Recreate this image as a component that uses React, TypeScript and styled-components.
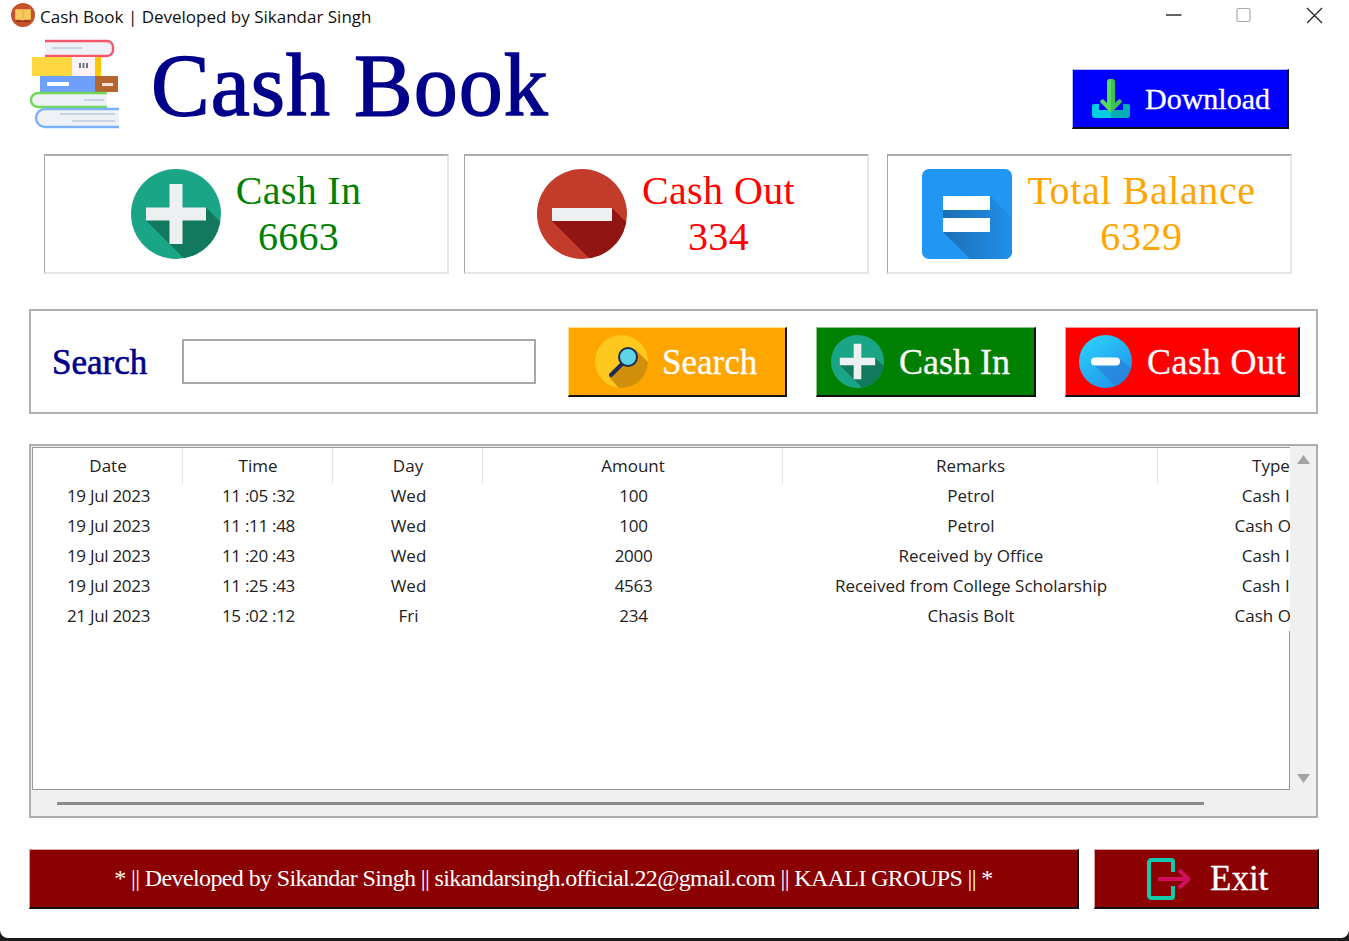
import React from 'react'
import styled, { createGlobalStyle } from 'styled-components'

const GlobalStyle = createGlobalStyle`
  html, body {
    margin: 0;
    padding: 0;
    background: #1c1c1c;
  }
  * {
    box-sizing: border-box;
  }
`

const serif = `"Liberation Serif", "Times New Roman", serif`
const ui = `"Open Sans", "Noto Sans", sans-serif`

const Window = styled.div`
  width: 1349px;
  height: 938px;
  background: #fff;
  border-radius: 0 0 8px 8px;
  overflow: hidden;
  display: flex;
  flex-direction: column;
`
const TitleBar = styled.div`
  height: 33px;
  display: flex;
  align-items: flex-start;
  padding: 3px 0 0 11px;
`
const TitleText = styled.span`
  flex: 1;
  margin-left: 5px;
  font-family: ${ui};
  font-size: 17px;
  line-height: 27px;
  color: #111;
`
const WindowControl = styled.div`
  width: 70px;
  height: 24px;
  display: flex;
  align-items: center;
  justify-content: center;
`
const Main = styled.main`
  flex: 1;
  display: flex;
  flex-direction: column;
  padding: 0 31px 0 29px;
`
const Header = styled.header`
  height: 121px;
  display: flex;
  align-items: flex-start;
  padding: 5px 0 0 1px;
`
const AppTitle = styled.h1`
  flex: 1;
  margin: 2px 0 0 31px;
  font-family: ${serif};
  font-size: 88px;
  font-weight: 400;
  letter-spacing: 1px;
  line-height: 92px;
  color: #00008b;
  -webkit-text-stroke: 1.4px #00008b;
`
const Button = styled.button<{ $bg: string; $w: number; $pad: number; $gap: number; $size: number; $light: string }>`
  width: ${(p) => p.$w}px;
  height: 100%;
  display: flex;
  align-items: center;
  gap: ${(p) => p.$gap}px;
  padding: 0 0 0 ${(p) => p.$pad}px;
  background: ${(p) => p.$bg};
  border: 0;
  border-top: 1px solid ${(p) => p.$light};
  border-left: 1px solid ${(p) => p.$light};
  border-right: 2px solid #111;
  border-bottom: 2px solid #111;
  font-family: ${serif};
  font-size: ${(p) => p.$size}px;
  color: #fff;
  -webkit-text-stroke: 0.3px #fff;
`
const ButtonLabel = styled.span<{ $ls?: number; $drop?: number }>`
  letter-spacing: ${(p) => p.$ls ?? 0}px;
  padding-top: ${(p) => p.$drop ?? 0}px;
`
const DownloadSlot = styled.div`
  width: 217px;
  height: 60px;
  margin: 31px 29px 0 0;
`
const StatRow = styled.section`
  height: 120px;
  display: grid;
  grid-template-columns: 420px 423px 405px;
  margin-left: 15px;
`
const StatCard = styled.div`
  width: 405px;
  display: flex;
  align-items: center;
  justify-content: center;
  gap: 15px;
  border-top: 2px solid #adadad;
  border-left: 1px solid #a6a6a6;
  border-right: 2px solid #e6e6e6;
  border-bottom: 2px solid #e6e6e6;
`
const StatText = styled.div<{ $color: string; $ls: number }>`
  font-family: ${serif};
  font-size: 40px;
  line-height: 46px;
  letter-spacing: ${(p) => p.$ls}px;
  text-align: center;
  color: ${(p) => p.$color};
`
const SearchPanel = styled.section`
  height: 105px;
  margin-top: 35px;
  border: 2px solid #b0b0b0;
  display: grid;
  grid-template-columns: 102px 357px 219px 220px 235px;
  column-gap: 29px;
  align-items: center;
  padding-left: 20px;
`
const SearchLabel = styled.label`
  padding: 2px 0 0 1px;
  font-family: ${serif};
  font-size: 35px;
  color: #00008b;
  -webkit-text-stroke: 0.6px #00008b;
`
const SearchInput = styled.input`
  width: 354px;
  height: 45px;
  border: 2px solid #a8a8a8;
  background: #fff;
  outline: none;
`
const ActionButton = styled(Button)`
  height: 70px;
`
const TablePanel = styled.section`
  height: 374px;
  margin-top: 30px;
  border: 2px solid #adadad;
  background: #f0f0f0;
  display: grid;
  grid-template-columns: 1fr 26px;
  grid-template-rows: 1fr 26px;
  padding: 1px 0 0 1px;
`
const TableArea = styled.div`
  border-top: 1px solid #9a9a9a;
  border-left: 1px solid #9a9a9a;
  border-bottom: 1px solid #9a9a9a;
  background: #fff;
  display: flex;
  flex-direction: column;
  overflow: hidden;
  font-family: ${ui};
  font-size: 17px;
  color: #222;
`
const Row = styled.div<{ $head?: boolean }>`
  display: grid;
  grid-template-columns: 150px 150px 150px 300px 375px 225px;
  height: ${(p) => (p.$head ? 33 : 30)}px;
`
const Cell = styled.div<{ $head?: boolean }>`
  height: ${(p) => (p.$head ? 36 : 30)}px;
  line-height: ${(p) => (p.$head ? 36 : 30)}px;
  padding-left: 1px;
  text-align: center;
  white-space: nowrap;
  border-right: ${(p) => (p.$head ? '1px solid #e4e4e4' : '0')};
  letter-spacing: ${(p) => (p.$head ? '0' : '-0.3px')};
  &:nth-child(3),
  &:nth-child(n + 5) {
    letter-spacing: 0;
  }
  &:last-child {
    border-right: 0;
  }
`
const TableFiller = styled.div`
  flex: 1;
  border-right: 1px solid #9a9a9a;
`
const VScroll = styled.div`
  display: flex;
  flex-direction: column;
  justify-content: space-between;
  align-items: center;
  padding: 8px 0 7px;
`
const HScroll = styled.div`
  display: flex;
  align-items: center;
  padding: 1px 0 0 25px;
`
const HThumb = styled.div`
  width: 1147px;
  height: 3px;
  background: #8a8a8a;
`
const Corner = styled.div``
const Footer = styled.footer`
  height: 60px;
  margin: 31px -1px 0 0;
  display: flex;
  gap: 15px;
`
const FooterBar = styled.div`
  width: 1050px;
  display: flex;
  align-items: center;
  justify-content: center;
  background: #8b0000;
  border-top: 1px solid #d9a3a3;
  border-left: 1px solid #d9a3a3;
  border-right: 2px solid #111;
  border-bottom: 2px solid #111;
  font-family: ${serif};
  font-size: 24px;
  letter-spacing: -0.62px;
  color: #fff;
`

const AppIcon = () => (
  <svg width="24" height="24" viewBox="0 0 23 23">
    <circle cx="11.5" cy="11.5" r="11.5" fill="#c5522b" />
    <path d="M4 6h15v10H13l-1 1h-2l-1-1H4z" fill="#f8c95a" />
    <path d="M11.5 6.5V16" stroke="#e9a83c" strokeWidth="1" />
    <path d="M5 17.5h13" stroke="#8c3517" strokeWidth="1.5" />
  </svg>
)
const Minimize = () => (
  <svg width="16" height="16" viewBox="0 0 16 16">
    <path d="M0 8h15.5" stroke="#222" strokeWidth="1.4" />
  </svg>
)
const Maximize = () => (
  <svg width="16" height="16" viewBox="0 0 16 16">
    <rect x="1" y="1.5" width="13" height="13" rx="1.5" fill="none" stroke="#aaa" strokeWidth="1.2" />
  </svg>
)
const CloseX = () => (
  <svg width="17" height="17" viewBox="0 0 17 17">
    <path d="M1 1l15 15M16 1L1 16" stroke="#222" strokeWidth="1.2" />
  </svg>
)
const BooksLogo = () => (
  <svg width="90" height="92" viewBox="0 0 90 92">
    <path d="M15 3h62a6 6 0 0 1 6 6v3a6 6 0 0 1-6 6H15" fill="#eef2f7" stroke="#f9566d" strokeWidth="2.4" />
    <path d="M22 10h30" stroke="#c8d4e2" strokeWidth="2" />
    <rect x="2" y="19" width="40" height="19" fill="#ffd83f" />
    <rect x="42" y="19" width="23" height="19" fill="#fdf3f4" />
    <rect x="65" y="19" width="6" height="19" fill="#ffc800" />
    <path d="M50 25v5M53.500 25v5M57 25v5" stroke="#6d7480" strokeWidth="2" />
    <rect x="10" y="38" width="55" height="16" fill="#6e9ffa" />
    <rect x="65" y="38" width="23" height="16" fill="#b5662e" />
    <rect x="17" y="44" width="22" height="4" rx="1" fill="#fff" />
    <rect x="72" y="45" width="11" height="3" fill="#f3e3d3" />
    <path d="M77 55H8a7 7 0 0 0-7 7v0a7 7 0 0 0 7 7h69" fill="#eef2f7" stroke="#6fd857" strokeWidth="2.400" />
    <path d="M54 62h20" stroke="#c8d4e2" strokeWidth="2" />
    <path d="M89 71H15a9 9 0 0 0-9 9v0a9 9 0 0 0 9 9h74" fill="#eef2f7" stroke="#7db0fb" strokeWidth="2.400" />
    <path d="M30 76h55M42 83h43" stroke="#c8d4e2" strokeWidth="2" />
  </svg>
)
const DownloadIcon = () => (
  <svg width="38" height="40" viewBox="0 0 38 40">
    <path d="M0 27a2 2 0 0 1 2-2h5v6h12v8H3a3 3 0 0 1-3-3z" fill="#00cfe0" />
    <path d="M38 27a2 2 0 0 0-2-2h-5v6H19v8h16a3 3 0 0 0 3-3z" fill="#00adb5" />
    <path d="M15 2a3.500 3.500 0 0 1 4-2v34L9 24a2 2 0 0 1 3-3l3 3z" fill="#55dc5c" />
    <path d="M23 2a3.500 3.500 0 0 0-4-2v34l10-10a2 2 0 0 0-3-3l-3 3z" fill="#3fbf58" />
  </svg>
)
const PlusBadge = ({ size }: { size: number }) => (
  <svg width={size} height={size} viewBox="0 0 90 90">
    <clipPath id={`plus-${size}`}>
      <circle cx="45" cy="45" r="45" />
    </clipPath>
    <circle cx="45" cy="45" r="45" fill="#1ba587" />
    <g clipPath={`url(#plus-${size})`}>
      <path d="M15 51.500L55 91.500H95V58.500L75 38.500z" fill="#12795f" />
    </g>
    <path d="M38.500 15h13v23.500H75v13H51.500V75h-13V51.500H15v-13h23.500z" fill="#ecf0f1" />
  </svg>
)
const MinusBadge = () => (
  <svg width="90" height="90" viewBox="0 0 90 90">
    <clipPath id="minus-clip">
      <circle cx="45" cy="45" r="45" />
    </clipPath>
    <circle cx="45" cy="45" r="45" fill="#c23b2b" />
    <g clipPath="url(#minus-clip)">
      <path d="M15 52L55 92H95V59L75 39z" fill="#901513" />
    </g>
    <rect x="15" y="39" width="60" height="13" fill="#ecf0f1" />
  </svg>
)
const EqualsBadge = () => (
  <svg width="90" height="90" viewBox="0 0 90 90">
    <defs>
      <linearGradient id="equals-shadow" x1="0" y1="0" x2="1" y2="0">
        <stop offset="0" stopColor="#1c6fb5" />
        <stop offset="1" stopColor="#2090ea" />
      </linearGradient>
      <clipPath id="equals-clip">
        <rect width="90" height="90" rx="7" />
      </clipPath>
    </defs>
    <rect width="90" height="90" rx="7" fill="#2196f3" />
    <g clipPath="url(#equals-clip)">
      <path d="M21 41V63L48 90H90V49L68 27z" fill="url(#equals-shadow)" />
    </g>
    <rect x="21" y="27" width="47" height="14" fill="#fff" />
    <rect x="21" y="49" width="47" height="14" fill="#fff" />
  </svg>
)
const SearchBadge = () => (
  <svg width="53" height="53" viewBox="0 0 53 53">
    <clipPath id="search-clip">
      <circle cx="26.500" cy="26.500" r="26.500" />
    </clipPath>
    <circle cx="26.500" cy="26.500" r="26.500" fill="#ffc81e" />
    <g clipPath="url(#search-clip)">
      <path d="M40 14L60 34V60H30L14 42z" fill="#d28f0c" />
    </g>
    <path d="M16 40l11-11" stroke="#1d2a52" strokeWidth="4" strokeLinecap="round" />
    <circle cx="33" cy="22" r="9" fill="#5fd4e6" stroke="#1d2a52" strokeWidth="2" />
  </svg>
)
const BlueMinusBadge = () => (
  <svg width="53" height="53" viewBox="0 0 53 53">
    <defs>
      <linearGradient id="blue-grad" x1="0.15" y1="0" x2="0.85" y2="1">
        <stop offset="0" stopColor="#2bd2fc" />
        <stop offset="1" stopColor="#2190e8" />
      </linearGradient>
      <clipPath id="blue-clip">
        <circle cx="26.500" cy="26.500" r="26.500" />
      </clipPath>
    </defs>
    <circle cx="26.500" cy="26.500" r="26.500" fill="url(#blue-grad)" />
    <g clipPath="url(#blue-clip)">
      <path d="M15 30L38 53H55V36L41 24z" fill="#2a79d6" opacity="0.6" />
    </g>
    <rect x="12" y="22.500" width="29" height="8" rx="4" fill="#fff" />
  </svg>
)
const ExitIcon = () => (
  <svg width="44" height="42" viewBox="0 0 44 42">
    <path d="M26 14V3.500a1.500 1.500 0 0 0-1.500-1.500H4.500A2.500 2.500 0 0 0 2 4.500v33A2.500 2.500 0 0 0 4.500 40h20a1.500 1.500 0 0 0 1.500-1.500V28" fill="none" stroke="#14c8ac" strokeWidth="4" />
    <path d="M11 21h30M32 12l9.500 9-9.500 9" fill="none" stroke="#d0105f" strokeWidth="4" strokeLinejoin="round" />
  </svg>
)
const ScrollArrow = ({ down }: { down?: boolean }) => (
  <svg width="13" height="9" viewBox="0 0 13 9">
    <path d={down ? 'M0 0h13L6.500 9z' : 'M6.500 0L13 9H0z'} fill="#a3a3a3" />
  </svg>
)

const columns = ['Date', 'Time', 'Day', 'Amount', 'Remarks', 'Type']
const rows = [
  ['19 Jul 2023', '11 :05 :32', 'Wed', '100', 'Petrol', 'Cash In'],
  ['19 Jul 2023', '11 :11 :48', 'Wed', '100', 'Petrol', 'Cash Out'],
  ['19 Jul 2023', '11 :20 :43', 'Wed', '2000', 'Received by Office', 'Cash In'],
  ['19 Jul 2023', '11 :25 :43', 'Wed', '4563', 'Received from College Scholarship', 'Cash In'],
  ['21 Jul 2023', '15 :02 :12', 'Fri', '234', 'Chasis Bolt', 'Cash Out'],
]

export default function App() {
  return (
    <>
      <GlobalStyle />
      <Window>
        <TitleBar>
          <AppIcon />
          <TitleText>Cash Book | Developed by Sikandar Singh</TitleText>
          <WindowControl>
            <Minimize />
          </WindowControl>
          <WindowControl>
            <Maximize />
          </WindowControl>
          <WindowControl>
            <CloseX />
          </WindowControl>
        </TitleBar>
        <Main>
          <Header>
            <BooksLogo />
            <AppTitle>Cash Book</AppTitle>
            <DownloadSlot>
              <Button $bg="#0000ff" $w={217} $pad={19} $gap={15} $size={30} $light="#b9b9f5">
                <DownloadIcon />
                <ButtonLabel>Download</ButtonLabel>
              </Button>
            </DownloadSlot>
          </Header>
          <StatRow>
            <StatCard>
              <PlusBadge size={90} />
              <StatText $color="#008000" $ls={0.3}>
                Cash In
                <br />
                6663
              </StatText>
            </StatCard>
            <StatCard>
              <MinusBadge />
              <StatText $color="#ff0000" $ls={0.4}>
                Cash Out
                <br />
                334
              </StatText>
            </StatCard>
            <StatCard>
              <EqualsBadge />
              <StatText $color="#ffa500" $ls={0.6}>
                Total Balance
                <br />
                6329
              </StatText>
            </StatCard>
          </StatRow>
          <SearchPanel>
            <SearchLabel>Search</SearchLabel>
            <SearchInput />
            <ActionButton $bg="#ffa500" $w={219} $pad={26} $gap={14} $size={35} $light="#ffe08a">
              <SearchBadge />
              <ButtonLabel $drop={3}>Search</ButtonLabel>
            </ActionButton>
            <ActionButton $bg="#008000" $w={220} $pad={14} $gap={15} $size={36} $light="#8ac48a">
              <PlusBadge size={53} />
              <ButtonLabel $drop={2}>Cash In</ButtonLabel>
            </ActionButton>
            <ActionButton $bg="#ff0000" $w={235} $pad={13} $gap={15} $size={36} $light="#ff9a9a">
              <BlueMinusBadge />
              <ButtonLabel $drop={2} $ls={0.5}>
                Cash Out
              </ButtonLabel>
            </ActionButton>
          </SearchPanel>
          <TablePanel>
            <TableArea>
              <Row $head>
                {columns.map((c) => (
                  <Cell $head key={c}>
                    {c}
                  </Cell>
                ))}
              </Row>
              {rows.map((r) => (
                <Row key={r[1]}>
                  {r.map((v, i) => (
                    <Cell key={i}>{v}</Cell>
                  ))}
                </Row>
              ))}
              <TableFiller />
            </TableArea>
            <VScroll>
              <ScrollArrow />
              <ScrollArrow down />
            </VScroll>
            <HScroll>
              <HThumb />
            </HScroll>
            <Corner />
          </TablePanel>
          <Footer>
            <FooterBar>* || Developed by Sikandar Singh || sikandarsingh.official.22@gmail.com || KAALI GROUPS || *</FooterBar>
            <Button $bg="#8b0000" $w={225} $pad={52} $gap={19} $size={35} $light="#d9a3a3">
              <ExitIcon />
              <ButtonLabel>Exit</ButtonLabel>
            </Button>
          </Footer>
        </Main>
      </Window>
    </>
  )
}
